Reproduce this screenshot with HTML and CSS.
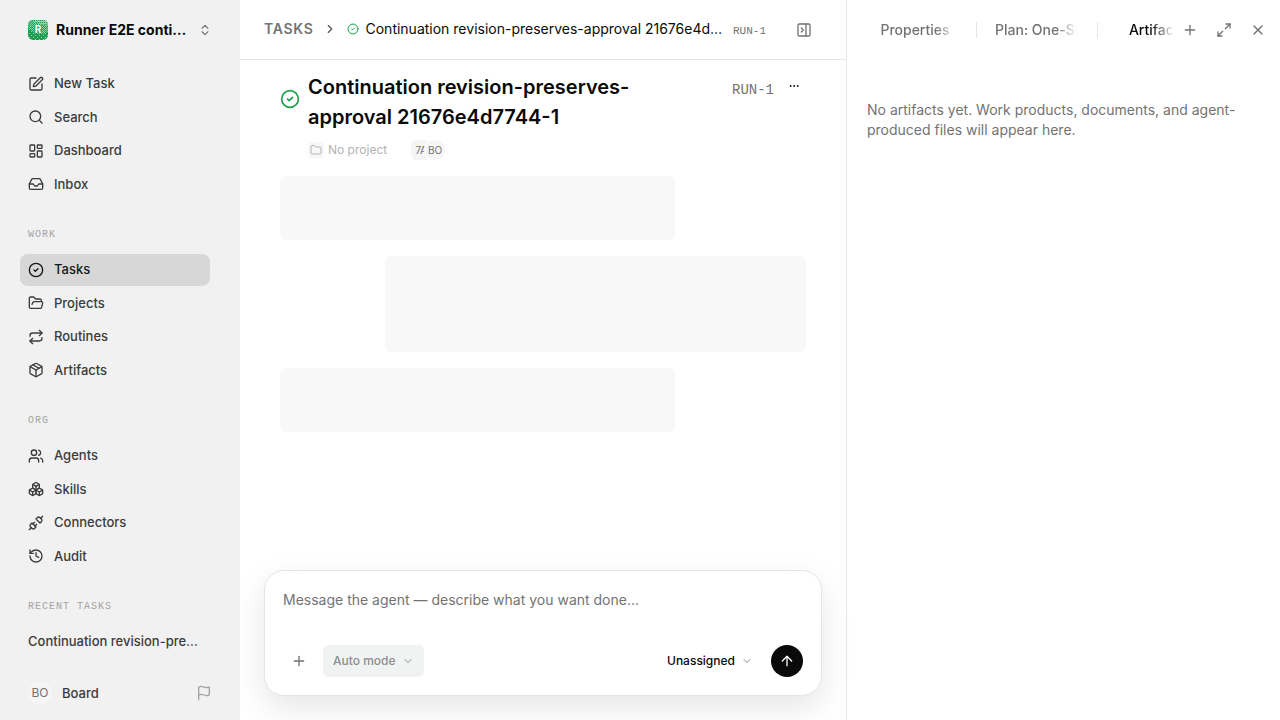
FILE: index.html
```html
<!DOCTYPE html>
<html lang="en">
<head>
<meta charset="utf-8">
<meta name="viewport" content="width=device-width, initial-scale=1">
<title>Tasks</title>
<link rel="stylesheet" href="styles.css">
</head>
<body>
<div class="app">
  <aside class="sidebar">
    <button class="workspace" type="button">
      <svg class="workspace-logo" viewBox="0 0 20 20" aria-hidden="true">
        <defs>
          <clipPath id="logo-clip"><rect width="20" height="20" rx="5"/></clipPath>
          <pattern id="logo-checker" width="2" height="2" patternUnits="userSpaceOnUse"><rect width="1" height="1" fill="#8ad4a8"/><rect x="1" y="1" width="1" height="1" fill="#8ad4a8"/></pattern>
          <pattern id="logo-dots" width="2" height="2" patternUnits="userSpaceOnUse"><rect width="1" height="1" fill="#1f9d50"/></pattern>
          <pattern id="logo-sparse" width="4" height="4" patternUnits="userSpaceOnUse"><rect x="1" y="1" width="1" height="1" fill="#8ad4a8"/><rect x="3" y="3" width="1" height="1" fill="#8ad4a8"/></pattern>
        </defs>
        <g clip-path="url(#logo-clip)">
          <rect width="20" height="20" fill="#1f9d50"/>
          <path d="M3 0h17v6L8 3z" fill="#8ad4a8"/>
          <path d="M3 0h17v6L8 3z" fill="url(#logo-dots)"/>
          <path d="M0 0h3l5 3 12 3v6l-5 2H8L0 7z" fill="url(#logo-checker)"/>
          <path d="M0 7l8 7h7l5-2v8H0z" fill="url(#logo-sparse)"/>
          <path d="M6 5h8v8H6z" fill="#1f9d50" fill-opacity="0.6"/>
        </g>
        <text x="10" y="13" text-anchor="middle" class="logo-letter">R</text>
      </svg>
      <span class="workspace-name">Runner E2E continuation</span>
      <svg class="icon icon-sm muted" viewBox="0 0 24 24"><path d="m7 15 5 5 5-5"/><path d="m7 9 5-5 5 5"/></svg>
    </button>

    <nav class="nav">
      <div class="nav-group">
        <a class="nav-item" href="#"><svg class="icon" viewBox="0 0 24 24"><path d="M12 3H5a2 2 0 0 0-2 2v14a2 2 0 0 0 2 2h14a2 2 0 0 0 2-2v-7"/><path d="M18.375 2.625a1 1 0 0 1 3 3l-9.013 9.014a2 2 0 0 1-.853.505l-2.873.84a.5.5 0 0 1-.62-.62l.84-2.873a2 2 0 0 1 .506-.852z"/></svg>New Task</a>
        <a class="nav-item" href="#"><svg class="icon" viewBox="0 0 24 24"><path d="m21 21-4.34-4.34"/><circle cx="11" cy="11" r="8"/></svg>Search</a>
        <a class="nav-item" href="#"><svg class="icon" viewBox="0 0 24 24"><rect width="7" height="9" x="3" y="3" rx="1"/><rect width="7" height="5" x="14" y="3" rx="1"/><rect width="7" height="9" x="14" y="12" rx="1"/><rect width="7" height="5" x="3" y="16" rx="1"/></svg>Dashboard</a>
        <a class="nav-item" href="#"><svg class="icon" viewBox="0 0 24 24"><path d="M22 12h-6l-2 3h-4l-2-3H2"/><path d="M5.45 5.11 2 12v6a2 2 0 0 0 2 2h16a2 2 0 0 0 2-2v-6l-3.45-6.89A2 2 0 0 0 16.76 4H7.24a2 2 0 0 0-1.79 1.11z"/></svg>Inbox</a>
      </div>
      <h2 class="nav-label">Work</h2>
      <div class="nav-group">
        <a class="nav-item active" href="#" aria-current="page"><svg class="icon" viewBox="0 0 24 24"><circle cx="12" cy="12" r="10"/><path d="m9 12 2 2 4-4"/></svg>Tasks</a>
        <a class="nav-item" href="#"><svg class="icon" viewBox="0 0 24 24"><path d="m6 14 1.5-2.9A2 2 0 0 1 9.24 10H20a2 2 0 0 1 1.94 2.5l-1.54 6a2 2 0 0 1-1.95 1.5H4a2 2 0 0 1-2-2V5a2 2 0 0 1 2-2h3.9a2 2 0 0 1 1.69.9l.81 1.2a2 2 0 0 0 1.67.9H18a2 2 0 0 1 2 2v2"/></svg>Projects</a>
        <a class="nav-item" href="#"><svg class="icon" viewBox="0 0 24 24"><path d="m17 2 4 4-4 4"/><path d="M3 11v-1a4 4 0 0 1 4-4h14"/><path d="m7 22-4-4 4-4"/><path d="M21 13v1a4 4 0 0 1-4 4H3"/></svg>Routines</a>
        <a class="nav-item" href="#"><svg class="icon" viewBox="0 0 24 24"><path d="M11 21.73a2 2 0 0 0 2 0l7-4A2 2 0 0 0 21 16V8a2 2 0 0 0-1-1.73l-7-4a2 2 0 0 0-2 0l-7 4A2 2 0 0 0 3 8v8a2 2 0 0 0 1 1.73z"/><path d="M12 22V12"/><path d="M3.29 7 12 12l8.71-5"/><path d="m7.5 4.27 9 5.15"/></svg>Artifacts</a>
      </div>
      <h2 class="nav-label">Org</h2>
      <div class="nav-group">
        <a class="nav-item" href="#"><svg class="icon" viewBox="0 0 24 24"><path d="M16 21v-2a4 4 0 0 0-4-4H6a4 4 0 0 0-4 4v2"/><path d="M16 3.128a4 4 0 0 1 0 7.744"/><path d="M22 21v-2a4 4 0 0 0-3-3.87"/><circle cx="9" cy="7" r="4"/></svg>Agents</a>
        <a class="nav-item" href="#"><svg class="icon" viewBox="0 0 24 24"><path d="M2.97 12.92A2 2 0 0 0 2 14.63v3.24a2 2 0 0 0 .97 1.71l3 1.8a2 2 0 0 0 2.06 0L12 19v-5.5l-5-3-4.03 2.42Z"/><path d="m7 16.5-4.74-2.85"/><path d="m7 16.5 5-3"/><path d="M7 16.5v5.17"/><path d="M12 13.5V19l3.97 2.38a2 2 0 0 0 2.06 0l3-1.8a2 2 0 0 0 .97-1.71v-3.24a2 2 0 0 0-.97-1.71L17 10.5l-5 3Z"/><path d="m17 16.5-5-3"/><path d="m17 16.5 4.74-2.85"/><path d="M17 16.5v5.17"/><path d="M7.97 4.42A2 2 0 0 0 7 6.13v4.37l5 3 5-3V6.13a2 2 0 0 0-.97-1.71l-3-1.8a2 2 0 0 0-2.06 0l-3 1.8Z"/><path d="M12 8 7.26 5.15"/><path d="m12 8 4.74-2.85"/><path d="M12 13.5V8"/></svg>Skills</a>
        <a class="nav-item" href="#"><svg class="icon" viewBox="0 0 24 24"><path d="m19 5 3-3"/><path d="m2 22 3-3"/><path d="M6.3 20.3a2.4 2.4 0 0 0 3.4 0L12 18l-6-6-2.3 2.3a2.4 2.4 0 0 0 0 3.4Z"/><path d="M7.5 13.5 10 11"/><path d="M10.5 16.5 13 14"/><path d="m12 6 6 6 2.3-2.3a2.4 2.4 0 0 0 0-3.4l-2.6-2.6a2.4 2.4 0 0 0-3.4 0Z"/></svg>Connectors</a>
        <a class="nav-item" href="#"><svg class="icon" viewBox="0 0 24 24"><path d="M3 12a9 9 0 1 0 9-9 9.75 9.75 0 0 0-6.74 2.74L3 8"/><path d="M3 3v5h5"/><path d="M12 7v5l4 2"/></svg>Audit</a>
      </div>
      <h2 class="nav-label">Recent Tasks</h2>
      <div class="nav-group">
        <a class="nav-item" href="#"><span class="truncate">Continuation revision-preserves-approval</span></a>
      </div>
    </nav>

    <footer class="account">
      <button class="account-button" type="button"><span class="avatar avatar-lg">BO</span>Board</button>
      <button class="icon-button faint" type="button" aria-label="Feedback"><svg class="icon" viewBox="0 0 24 24"><path d="M4 22V4a1 1 0 0 1 .4-.8A6 6 0 0 1 8 2c3 0 5 2 7.333 2q2 0 3.067-.8A1 1 0 0 1 20 4v10a1 1 0 0 1-.4.8A6 6 0 0 1 16 16c-3 0-5-2-8-2a6 6 0 0 0-4 1.528"/></svg></button>
    </footer>
  </aside>

  <main class="main">
    <header class="topbar">
      <nav class="crumbs" aria-label="Breadcrumb">
        <a class="crumb" href="#">Tasks</a>
        <svg class="icon icon-sm crumb-arrow" viewBox="0 0 24 24"><path d="m9 18 6-6-6-6"/></svg>
        <div class="crumb-current">
          <svg class="icon icon-xs success" viewBox="0 0 24 24"><circle cx="12" cy="12" r="10"/><path d="m9 12 2 2 4-4"/></svg>
          <span class="truncate">Continuation revision-preserves-approval 21676e4d7744-1</span>
        </div>
      </nav>
      <span class="run-id run-id-sm">RUN-1</span>
      <button class="icon-button panel-toggle" type="button" aria-label="Toggle panel"><svg class="icon" viewBox="0 0 24 24"><rect width="18" height="18" x="3" y="3" rx="2"/><path d="M15 3v18"/><path d="m8 9 3 3-3 3"/></svg></button>
    </header>

    <section class="task">
      <div class="task-head">
        <svg class="icon icon-lg success" viewBox="0 0 24 24"><circle cx="12" cy="12" r="10"/><path d="m9 12 2 2 4-4"/></svg>
        <h1 class="task-title">Continuation revision-preserves-approval 21676e4d7744-1</h1>
        <span class="run-id">RUN-1</span>
        <button class="icon-button more" type="button" aria-label="More actions"><svg class="icon icon-xs" viewBox="0 0 24 24"><circle cx="12" cy="12" r="1"/><circle cx="19" cy="12" r="1"/><circle cx="5" cy="12" r="1"/></svg></button>
      </div>
      <div class="task-meta">
        <button class="project" type="button"><span class="project-icon"><svg class="icon icon-xs" viewBox="0 0 24 24"><path d="M20 20a2 2 0 0 0 2-2V8a2 2 0 0 0-2-2h-7.900a2 2 0 0 1-1.690-.900L9.600 3.900A2 2 0 0 0 7.930 3H4a2 2 0 0 0-2 2v13a2 2 0 0 0 2 2Z"/></svg></span>No project</button>
        <div class="people"><span class="avatar avatar-square">7A</span><span class="avatar avatar-front">BO</span></div>
      </div>
      <div class="skeletons">
        <div class="skeleton"></div>
        <div class="skeleton skeleton-reply"></div>
        <div class="skeleton"></div>
      </div>
    </section>

    <form class="composer">
      <textarea class="composer-input" rows="1" aria-label="Message the agent" placeholder="Message the agent — describe what you want done..."></textarea>
      <div class="composer-bar">
        <button class="icon-button attach" type="button" aria-label="Add attachment"><svg class="icon" viewBox="0 0 24 24"><path d="M5 12h14"/><path d="M12 5v14"/></svg></button>
        <button class="mode" type="button" disabled>Auto mode<svg class="icon icon-xs" viewBox="0 0 24 24"><path d="m6 9 6 6 6-6"/></svg></button>
        <button class="assignee" type="button">Unassigned<svg class="icon icon-xs" viewBox="0 0 24 24"><path d="m6 9 6 6 6-6"/></svg></button>
        <button class="send" type="button" aria-label="Send"><svg class="icon" viewBox="0 0 24 24"><path d="m5 12 7-7 7 7"/><path d="M12 19V5"/></svg></button>
      </div>
    </form>
  </main>

  <aside class="panel">
    <header class="panel-head">
      <div class="tabs" role="tablist">
        <button class="tab" type="button" role="tab"><span class="tab-label">Properties</span></button>
        <button class="tab tab-long" type="button" role="tab"><span class="tab-label">Plan: One-Sentence</span></button>
        <button class="tab selected" type="button" role="tab" aria-selected="true"><span class="tab-label">Artifacts</span></button>
      </div>
      <div class="panel-actions">
        <button class="icon-button" type="button" aria-label="Add tab"><svg class="icon" viewBox="0 0 24 24"><path d="M5 12h14"/><path d="M12 5v14"/></svg></button>
        <button class="icon-button" type="button" aria-label="Expand"><svg class="icon" viewBox="0 0 24 24"><path d="M15 3h6v6"/><path d="m21 3-7 7"/><path d="m3 21 7-7"/><path d="M9 21H3v-6"/></svg></button>
        <button class="icon-button" type="button" aria-label="Close"><svg class="icon" viewBox="0 0 24 24"><path d="M18 6 6 18"/><path d="m6 6 12 12"/></svg></button>
      </div>
    </header>
    <p class="empty">No artifacts yet. Work products, documents, and agent-produced files will appear here.</p>
  </aside>
</div>
</body>
</html>
```
FILE: styles.css
```css
* { box-sizing: border-box; }

body {
  margin: 0;
  font-family: Inter, "Liberation Sans", sans-serif;
  font-size: 14px;
  line-height: 20px;
  color: #0a0a0a;
  background: #fff;
}

button { border: 0; background: none; padding: 0; margin: 0; font: inherit; color: inherit; }
a { color: inherit; text-decoration: none; }
h1, h2, p { margin: 0; }

.app { display: flex; height: 100vh; }

.icon {
  width: 16px;
  height: 16px;
  flex: none;
  fill: none;
  stroke: currentColor;
  stroke-width: 2;
  stroke-linecap: round;
  stroke-linejoin: round;
}
.icon-sm { width: 14px; height: 14px; }
.icon-xs { width: 12px; height: 12px; }
.icon-lg { width: 20px; height: 20px; }
.muted { color: #737373; }
.success { color: #16a34a; }
.truncate { min-width: 0; overflow: hidden; text-overflow: ellipsis; white-space: nowrap; }

.icon-button {
  display: flex;
  align-items: center;
  justify-content: center;
  flex: none;
  width: 32px;
  height: 32px;
  color: #737373;
}
.faint { color: #a3a3a3; }

/* Sidebar */
.sidebar {
  display: flex;
  flex-direction: column;
  flex: none;
  width: 240px;
  background: #f1f1f1;
}
.workspace {
  display: flex;
  align-items: center;
  gap: 8px;
  height: 60px;
  padding: 0 28px;
  text-align: left;
}
.workspace-logo { width: 20px; height: 20px; flex: none; }
.logo-letter { font: 700 10px Inter, sans-serif; fill: #fff; }
.workspace-name {
  flex: 1;
  min-width: 0;
  overflow: hidden;
  text-overflow: ellipsis;
  white-space: nowrap;
  font-weight: 700;
}
.nav { flex: 1; min-height: 0; overflow: hidden; padding: 8px 30px 0 20px; }
.nav-group { display: flex; flex-direction: column; gap: 2px; }
.nav-item {
  display: flex;
  align-items: center;
  gap: 10px;
  padding: 6px 8px;
  border-radius: 8px;
  font-size: 13px;
  font-weight: 500;
  line-height: 1.5;
  color: #3b3b3b;
}
.nav-item.active { background: #d7d7d7; color: #171717; }
.nav-label {
  padding: 27px 8px 11px;
  font: 400 10px/16px "Liberation Mono", monospace;
  letter-spacing: 1px;
  text-transform: uppercase;
  color: #a3a3a3;
}
.account {
  display: flex;
  align-items: center;
  justify-content: space-between;
  height: 54px;
  padding: 0 20px 0 28px;
}
.account-button {
  display: flex;
  align-items: center;
  gap: 10px;
  font-size: 13px;
  font-weight: 500;
  color: #3b3b3b;
}
.avatar {
  display: flex;
  align-items: center;
  justify-content: center;
  width: 20px;
  height: 20px;
  border-radius: 10px;
  overflow: hidden;
  background: #f5f5f5;
  font-size: 10px;
  font-weight: 400;
  color: #737373;
}
.avatar-lg { width: 24px; height: 24px; border-radius: 12px; font-size: 12px; }

/* Main column */
.main { display: flex; flex-direction: column; flex: 1; min-width: 0; }
.topbar {
  display: flex;
  align-items: center;
  flex: none;
  height: 60px;
  padding: 0 26px 0 24px;
  border-bottom: 1px solid #e5e5e5;
}
.crumbs { display: flex; align-items: center; flex: 1; min-width: 0; padding-bottom: 2px; }
.crumb { font-weight: 600; letter-spacing: 0.05em; text-transform: uppercase; color: #737373; }
.crumb-arrow { margin: 0 10px; color: #525252; }
.crumb-current { display: flex; align-items: center; gap: 6px; flex: 1; min-width: 0; }
.run-id { font-family: "Liberation Mono", monospace; font-size: 14px; color: #737373; }
.run-id-sm { padding-top: 2px; margin-left: 8px; font-size: 11px; }
.panel-toggle { margin-left: 22px; }

.task { flex: 1; min-height: 0; padding: 12px 40px 0; }
.task-head { display: flex; align-items: flex-start; gap: 8px; }
.task-head .icon-lg { margin-top: 17px; }
.task-title { flex: 1; min-width: 0; padding-right: 24px; font-size: 20px; font-weight: 600; line-height: 30px; }
.task-head .run-id { line-height: 36px; }
.more { width: 24px; height: 28px; color: #0a0a0a; }
.task-meta { display: flex; align-items: center; gap: 24px; padding: 8px 0 0 28px; }
.project { display: flex; align-items: center; gap: 4px; font-size: 12px; color: #b3b3b3; }
.project-icon {
  display: flex;
  align-items: center;
  justify-content: center;
  width: 16px;
  height: 16px;
  border-radius: 4px;
  background: #f7f7f7;
}
.people { display: flex; }
.avatar-square { border-radius: 6px; }
.avatar-front { margin-left: -6px; box-shadow: 0 0 0 1px #fff; }
.skeletons { display: flex; flex-direction: column; gap: 16px; padding-top: 16px; }
.skeleton { width: 75%; height: 64px; border-radius: 6px; background: #f8f8f8; }
.skeleton-reply { width: 80%; height: 96px; align-self: flex-end; }

.composer {
  margin: 0 24px 24px;
  padding: 19px 18px 18px;
  border: 1px solid #e5e5e5;
  border-radius: 20px;
  background: #fff;
  box-shadow: 0 12px 32px rgba(0, 0, 0, 0.1);
}
.composer-input {
  display: block;
  width: 100%;
  height: 40px;
  margin-bottom: 15px;
  padding: 0;
  border: 0;
  outline: 0;
  resize: none;
  background: none;
  font: inherit;
  color: inherit;
}
.composer-input::placeholder { color: #737373; }
.composer-bar { display: flex; align-items: center; font-size: 12px; font-weight: 500; }
.mode {
  display: flex;
  align-items: center;
  gap: 6px;
  height: 32px;
  margin-left: 8px;
  padding: 0 10px;
  border-radius: 6px;
  background: #f1f3f3;
  color: #8b8d8f;
}
.assignee { display: flex; align-items: center; gap: 6px; margin-left: auto; }
.assignee .icon { color: #8a8a8a; }
.send {
  display: flex;
  align-items: center;
  justify-content: center;
  width: 32px;
  height: 32px;
  margin-left: 18px;
  border-radius: 16px;
  background: #0a0a0a;
  color: #fff;
}

/* Right panel */
.panel { flex: none; width: 434px; border-left: 1px solid #e5e5e5; }
.panel-head { display: flex; align-items: center; height: 60px; padding-right: 6px; }
.tabs {
  display: flex;
  align-items: center;
  flex: 1;
  min-width: 0;
  overflow: hidden;
  padding-left: 9px;
  mask-image: linear-gradient(to right, #000 calc(100% - 24px), transparent);
}
.tab {
  display: flex;
  align-items: center;
  flex: none;
  width: 121px;
  height: 16px;
  padding: 0 20px 0 18px;
  border-right: 1px solid #e5e5e5;
  color: #737373;
  font-weight: 500;
}
.tab-label {
  flex: 1;
  min-width: 0;
  overflow: hidden;
  white-space: nowrap;
  text-align: center;
  mask-image: linear-gradient(to right, #000 calc(100% - 20px), transparent);
}
.tab-long .tab-label { text-align: left; }
.tab.selected { color: #0a0a0a; border-right: 0; }
.panel-actions { display: flex; gap: 2px; }
.empty { padding: 40px 20px; color: #737373; }
```
